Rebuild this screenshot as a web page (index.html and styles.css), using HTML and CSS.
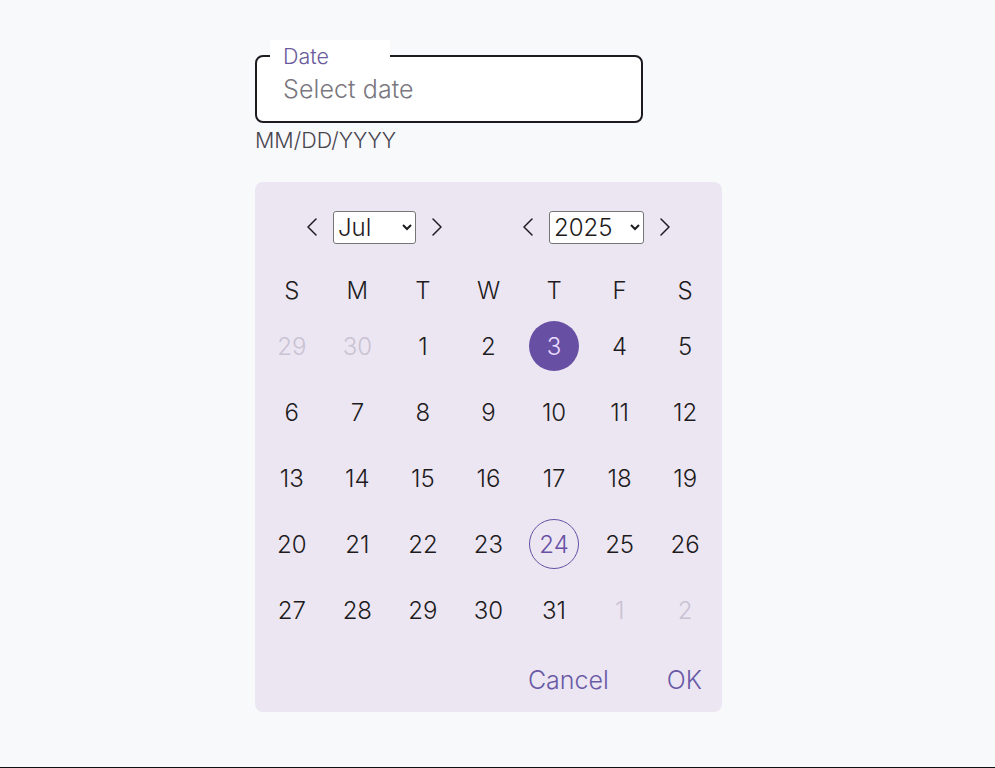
FILE: index.html
```html
<!DOCTYPE html>
<html lang="en">
<head>
    <meta charset="UTF-8">
    <meta name="viewport" content="width=device-width, initial-scale=1.0">
    <title>Date picker</title>
    <link rel="stylesheet" href="styles.css">
</head>
<body>
    <div class="picker">
        <div class="field">
            <span class="field-label">Date</span>
            <input class="field-input" type="text" placeholder="Select date">
        </div>
        <p class="hint">MM/DD/YYYY</p>

        <div class="calendar">
            <div class="nav">
                <div class="nav-group">
                    <button class="arrow" aria-label="Previous month">
                        <svg width="12" height="20" viewBox="0 0 12 20"><path d="M10 2 L2 10 L10 18" /></svg>
                    </button>
                    <select class="sel sel-month">
                        <option>Jan</option><option>Feb</option><option>Mar</option>
                        <option>Apr</option><option>May</option><option>Jun</option>
                        <option selected>Jul</option><option>Aug</option><option>Sep</option>
                        <option>Oct</option><option>Nov</option><option>Dec</option>
                    </select>
                    <button class="arrow" aria-label="Next month">
                        <svg width="12" height="20" viewBox="0 0 12 20"><path d="M2 2 L10 10 L2 18" /></svg>
                    </button>
                </div>
                <div class="nav-group">
                    <button class="arrow" aria-label="Previous year">
                        <svg width="12" height="20" viewBox="0 0 12 20"><path d="M10 2 L2 10 L10 18" /></svg>
                    </button>
                    <select class="sel sel-year">
                        <option>2024</option>
                        <option selected>2025</option>
                        <option>2026</option>
                    </select>
                    <button class="arrow" aria-label="Next year">
                        <svg width="12" height="20" viewBox="0 0 12 20"><path d="M2 2 L10 10 L2 18" /></svg>
                    </button>
                </div>
            </div>

            <div class="weekdays">
                <span>S</span><span>M</span><span>T</span><span>W</span><span>T</span><span>F</span><span>S</span>
            </div>

            <div class="days">
                <span class="day muted">29</span>
                <span class="day muted">30</span>
                <span class="day">1</span>
                <span class="day">2</span>
                <span class="day selected">3</span>
                <span class="day">4</span>
                <span class="day">5</span>

                <span class="day">6</span>
                <span class="day">7</span>
                <span class="day">8</span>
                <span class="day">9</span>
                <span class="day">10</span>
                <span class="day">11</span>
                <span class="day">12</span>

                <span class="day">13</span>
                <span class="day">14</span>
                <span class="day">15</span>
                <span class="day">16</span>
                <span class="day">17</span>
                <span class="day">18</span>
                <span class="day">19</span>

                <span class="day">20</span>
                <span class="day">21</span>
                <span class="day">22</span>
                <span class="day">23</span>
                <span class="day today">24</span>
                <span class="day">25</span>
                <span class="day">26</span>

                <span class="day">27</span>
                <span class="day">28</span>
                <span class="day">29</span>
                <span class="day">30</span>
                <span class="day">31</span>
                <span class="day muted">1</span>
                <span class="day muted">2</span>
            </div>

            <div class="actions">
                <button class="text-btn">Cancel</button>
                <button class="text-btn">OK</button>
            </div>
        </div>
    </div>
</body>
</html>
```

FILE: styles.css
```css
html {
    height: 100%;
}

body {
    margin: 0;
    min-height: 100%;
    box-sizing: border-box;
    background-color: #f8f9fb;
    border-bottom: 1px solid #111;
    font-family: Inter, 'Noto Sans', sans-serif;
    font-weight: 300;
    color: #1d1b20;
}

.picker {
    width: 467px;
    padding: 40px 0 0 255px;
}

/* text field with notched label */
.field {
    position: relative;
    width: 388px;
    padding-top: 15px;
}

.field-label {
    position: absolute;
    top: 0;
    left: 15px;
    width: 94px;
    padding: 2px 13px 0;
    height: 24px;
    background: #fff;
    color: #6a5b9c;
    font-size: 21.5px;
    line-height: 28px;
}

.field-input {
    display: block;
    width: 100%;
    height: 68px;
    box-sizing: border-box;
    padding: 0 24px 0 26px;
    border: 2px solid #1d1b20;
    border-radius: 8px;
    background: #fff;
    font-family: inherit;
    font-weight: 300;
    font-size: 25px;
    letter-spacing: 0.1px;
    color: #1d1b20;
    outline: none;
}

.field-input::placeholder {
    color: #7a777f;
}

.hint {
    margin: 3px 0 0;
    font-size: 21.5px;
    line-height: 28px;
    color: #49454f;
}

/* calendar panel */
.calendar {
    margin-top: 28px;
    width: 467px;
    box-sizing: border-box;
    padding: 0 4px;
    background-color: #ece6f3;
    border-radius: 8px;
}

.nav {
    display: flex;
    align-items: center;
    height: 90px;
    padding-left: 33px;
    gap: 51px;
}

.nav-group {
    display: flex;
    align-items: center;
}

.arrow {
    width: 40px;
    height: 40px;
    padding: 0;
    border: none;
    background: none;
    display: flex;
    align-items: center;
    justify-content: center;
    cursor: pointer;
}

.arrow path {
    fill: none;
    stroke: #1d1b20;
    stroke-width: 1.5;
    stroke-linecap: round;
    stroke-linejoin: round;
}

.sel {
    height: 33px;
    margin: 0 1px;
    border: 1px solid #767676;
    border-radius: 3px;
    background: #fff;
    font-family: inherit;
    font-weight: 300;
    font-size: 24px;
    color: #1d1b20;
}

.sel-month {
    width: 83px;
}

.sel-year {
    width: 95px;
}

.weekdays,
.days {
    display: grid;
    grid-template-columns: repeat(7, 1fr);
}

.weekdays {
    height: 36px;
    margin-bottom: 5px;
    align-items: center;
    font-size: 24px;
}

.weekdays span {
    text-align: center;
    color: #1d1b20;
}

.days {
    grid-auto-rows: 66px;
    align-items: center;
    justify-items: center;
}

.day {
    width: 50px;
    height: 50px;
    box-sizing: border-box;
    border-radius: 50%;
    display: flex;
    align-items: center;
    justify-content: center;
    font-size: 24px;
}

.day.muted {
    color: #c9c2d2;
}

.day.selected {
    background-color: #6750a4;
    color: #eaddff;
}

.day.today {
    border: 1px solid #6750a4;
    color: #6750a4;
}

.actions {
    display: flex;
    justify-content: flex-end;
    align-items: center;
    height: 69px;
    padding: 4px 4px 0 0;
    box-sizing: border-box;
    gap: 34px;
}

.text-btn {
    padding: 0 12px;
    border: none;
    background: none;
    font-family: inherit;
    font-weight: 300;
    font-size: 25px;
    color: #6a5aa6;
    cursor: pointer;
}
```
